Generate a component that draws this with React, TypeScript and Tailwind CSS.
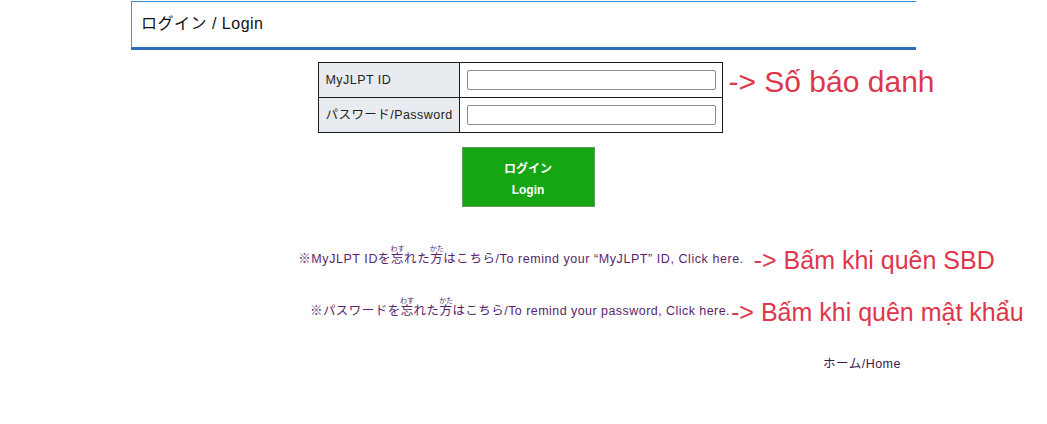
import React from "react";

const jp = { fontFamily: '"Liberation Sans", "Noto Sans CJK JP", sans-serif' };
const red = { fontFamily: '"Liberation Sans", Arial, sans-serif' };

function Rb({ b, t }: { b: string; t: string }) {
  return (
    <ruby>
      {b}
      <rt className="text-[7px] leading-[7px] tracking-normal">{t}</rt>
    </ruby>
  );
}

export default function App() {
  return (
    <div className="w-full h-[424px] bg-white overflow-hidden text-[#222]" style={jp}>
      {/* header */}
      <div className="mx-auto mt-[1px] w-[785px] flex flex-col">
        <div className="h-px bg-[#2f8ad0]" />
        <div className="h-[45px] border-l border-[#5a8db8] flex items-center pl-[9px] pb-[1px]">
          <span className="text-[16px] tracking-[0.5px] text-[#111]">ログイン / Login</span>
        </div>
        <div className="h-[3px] bg-[#2e6db3]" />
      </div>

      {/* form table */}
      <div className="flex justify-center pr-[7px] mt-[12px]">
        <div className="relative">
          <div className="w-[405px] border border-[#1a1a1a] text-[12.5px] tracking-[0.45px]">
            <div className="flex h-[35px] border-b border-[#1a1a1a]">
              <div className="w-[141px] bg-[#e8ecf0] border-r border-[#1a1a1a] flex items-center pl-[7px]">MyJLPT ID</div>
              <div className="flex-1 flex items-center pl-[7px]">
                <input className="w-[249px] h-[20px] border border-[#8a8a8a] rounded-[2px] bg-white" />
              </div>
            </div>
            <div className="flex h-[34px]">
              <div className="w-[141px] bg-[#e8ecf0] border-r border-[#1a1a1a] flex items-center pl-[7px]">パスワード/Password</div>
              <div className="flex-1 flex items-center pl-[7px]">
                <input type="password" className="w-[249px] h-[20px] border border-[#8a8a8a] rounded-[2px] bg-white" />
              </div>
            </div>
          </div>
          <div className="absolute left-full top-[2px] ml-[6px] whitespace-nowrap text-[30px] leading-[36px] text-[#e0364c]" style={red}>
            -&gt; Số báo danh
          </div>
        </div>
      </div>

      {/* button */}
      <div className="flex justify-center pl-[9px] mt-[14px]">
        <button className="w-[133px] h-[60px] bg-[#16a513] border border-[#5e9c5e] text-white font-bold text-[12px] leading-[21px] pt-[5px] flex flex-col items-center justify-center">
          <span>ログイン</span>
          <span>Login</span>
        </button>
      </div>

      {/* reminder links */}
      <div className="flex justify-center pr-[5px] mt-[38px]">
        <div className="relative text-[12.5px] tracking-[0.56px] text-[#5a1f6b] leading-[20px] whitespace-nowrap">
          <span>
            ※MyJLPT IDを<Rb b="忘" t="わす" />れた<Rb b="方" t="かた" />はこちら/To remind your “MyJLPT” ID, Click here.
          </span>
          <div className="absolute left-full bottom-[-6px] ml-[10px] whitespace-nowrap text-[25px] leading-[30px] tracking-normal text-[#e0364c]" style={red}>
            -&gt; Bấm khi quên SBD
          </div>
        </div>
      </div>

      <div className="flex justify-center pr-[7px] mt-[28px]">
        <div className="relative text-[12.5px] tracking-[0.45px] text-[#5a1f6b] leading-[20px] whitespace-nowrap">
          <span>
            ※パスワードを<Rb b="忘" t="わす" />れた<Rb b="方" t="かた" />はこちら/To remind your password, Click here.
          </span>
          <div className="absolute left-full bottom-[-6px] ml-[1px] whitespace-nowrap text-[25px] leading-[30px] tracking-normal text-[#e0364c]" style={red}>
            -&gt; Bấm khi quên mật khẩu
          </div>
        </div>
      </div>

      {/* home */}
      <div className="mx-auto w-[785px] flex justify-end pr-[15px] mt-[34px]">
        <span className="text-[12.5px] tracking-[0.5px] text-[#3a1a4a]">ホーム/Home</span>
      </div>
    </div>
  );
}
